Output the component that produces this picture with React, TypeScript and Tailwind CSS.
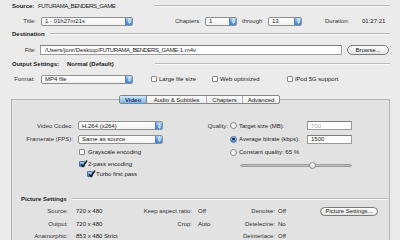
import React from "react";

const Arrows = () => (
  <svg width="5" height="6" viewBox="0 0 5 6">
    <path d="M2.5 0.3 L4.3 2.4 L0.7 2.4 Z" fill="#fff" />
    <path d="M2.5 5.7 L4.3 3.6 L0.7 3.6 Z" fill="#fff" />
  </svg>
);

const Popup = ({ text, w, caps }: { text: string; w: string; caps?: boolean }) => (
  <div className={`flex items-center h-[9px] ${w} shrink-0 bg-gradient-to-b from-white to-[#f2f2f2] border border-[#8f8f8f] rounded-[2px] overflow-hidden`}>
    <span className={`flex-1 pl-[3px] whitespace-nowrap overflow-hidden ${caps ? "tracking-[-0.2px]" : ""}`}>{text}</span>
    <div className="h-full w-[7px] shrink-0 bg-gradient-to-b from-[#a9d1f7] via-[#5a9de3] to-[#3f83d4] flex items-center justify-center border-l border-[#5a7fb0]">
      <Arrows />
    </div>
  </div>
);

const Check = ({ checked }: { checked?: boolean }) =>
  checked ? (
    <div className="relative w-[6px] h-[6px] shrink-0 rounded-[1px] border border-[#4a6fa5] bg-gradient-to-b from-[#a9d1f7] to-[#3f83d4]">
      <svg className="absolute -top-[2px] -left-[0px]" width="8" height="8" viewBox="0 0 8 8">
        <path d="M1 4.2 L3 6.5 L7 0.5" stroke="#1b1b1b" strokeWidth="1.4" fill="none" />
      </svg>
    </div>
  ) : (
    <div className="w-[6px] h-[6px] shrink-0 rounded-[1px] border border-[#8a8a8a] bg-gradient-to-b from-[#f0f0f0] to-white" />
  );

const Radio = ({ on }: { on?: boolean }) =>
  on ? (
    <div className="w-[7px] h-[7px] shrink-0 rounded-full border border-[#4a6fa5] bg-gradient-to-b from-[#a9d1f7] to-[#3f83d4] flex items-center justify-center">
      <div className="w-[2.5px] h-[2.5px] rounded-full bg-[#1b1b1b]" />
    </div>
  ) : (
    <div className="w-[7px] h-[7px] shrink-0 rounded-full border border-[#8a8a8a] bg-gradient-to-b from-[#eeeeee] to-white" />
  );

const Field = ({ text, w, gray }: { text: string; w: string; gray?: boolean }) => (
  <div className={`h-[9px] ${w} shrink-0 bg-white border border-[#9a9a9a] border-t-[#7d7d7d] flex items-center pl-[3px] whitespace-nowrap overflow-hidden ${gray ? "text-[#a8a8a8]" : ""}`}>
    {text}
  </div>
);

const Line = () => <div className="flex-1 h-[2px] border-t border-[#b9b9b9] border-b border-b-[#f8f8f8]" />;

export default function App() {
  return (
    <div className="w-[400px] h-[240px] overflow-hidden bg-[#ebebeb] text-[6px] leading-none text-[#222] font-['Liberation_Sans',Arial,sans-serif]">
      {/* Source */}
      <div className="h-[12px] flex items-center pl-[12px] pr-[10px]">
        <span className="w-[26px] font-bold shrink-0">Source:</span>
        <span className="w-[116px] shrink-0 tracking-[-0.45px]">FUTURAMA_BENDERS_GAME</span>
        <Line />
      </div>
      {/* Title row */}
      <div className="h-[18px] flex items-center">
        <span className="w-[36px] text-right shrink-0 text-[#333]">Title:</span>
        <div className="ml-[5px]"><Popup text="1 - 01h27m21s" w="w-[92px]" /></div>
        <span className="ml-[42px] w-[30px] shrink-0 text-[#333]">Chapters:</span>
        <Popup text="1" w="w-[32px]" />
        <span className="ml-[5px] w-[26px] shrink-0 text-[#333]">through</span>
        <Popup text="13" w="w-[34px]" />
        <span className="ml-[23px] w-[37px] shrink-0 text-[#333]">Duration:</span>
        <span className="shrink-0">01:27:21</span>
      </div>
      {/* Destination */}
      <div className="h-[8px] flex items-center pl-[12px] pr-[10px]">
        <span className="w-[38px] font-bold shrink-0">Destination</span>
        <Line />
      </div>
      {/* File */}
      <div className="mt-[4px] h-[16px] flex items-center">
        <span className="w-[36px] text-right shrink-0 text-[#333]">File:</span>
        <div className="ml-[4px]">
          <div className="h-[10px] w-[302px] bg-white border border-[#9a9a9a] border-t-[#7d7d7d] flex items-center pl-[4px] whitespace-nowrap overflow-hidden">
            /Users/jonr/Desktop/<span className="tracking-[-0.4px]">FUTURAMA_BENDERS_GAME</span>-1.m4v
          </div>
        </div>
        <div className="ml-[5px] h-[10px] w-[42px] rounded-full border border-[#7a7a7a] bg-gradient-to-b from-white to-[#e4e4e4] flex items-center justify-center">
          Browse...
        </div>
      </div>
      {/* Output settings */}
      <div className="h-[12px] flex items-center pl-[12px] pr-[10px]">
        <span className="w-[55px] font-bold shrink-0">Output Settings:</span>
        <span className="w-[88px] font-bold shrink-0">Normal (Default)</span>
        <Line />
      </div>
      {/* Format */}
      <div className="h-[18px] flex items-center">
        <span className="w-[35px] text-right shrink-0 text-[#333]">Format:</span>
        <div className="ml-[6px]"><Popup text="MP4 file" w="w-[92px]" /></div>
        <div className="ml-[18px] w-[61px] shrink-0 flex items-center gap-[2px]">
          <Check /> <span>Large file size</span>
        </div>
        <div className="w-[75px] shrink-0 flex items-center gap-[2px]">
          <Check /> <span>Web optimized</span>
        </div>
        <div className="shrink-0 flex items-center gap-[2px]">
          <Check /> <span>iPod 5G support</span>
        </div>
      </div>
      {/* Tabs */}
      <div className="mt-[7px] relative z-10 ml-[119px] w-[161px] h-[9px] flex border border-[#858585] rounded-[2px] overflow-hidden bg-gradient-to-b from-white to-[#ececec] text-[#222]">
        <div className="w-[27px] shrink-0 flex items-center justify-center bg-gradient-to-b from-[#d3e8fb] via-[#a3cbf1] to-[#7fb6ea] border-r border-[#858585] font-bold text-[#1e3a66]">Video</div>
        <div className="w-[60px] shrink-0 flex items-center justify-center border-r border-[#b0b0b0]">Audio &amp; Subtitles</div>
        <div className="w-[36px] shrink-0 flex items-center justify-center border-r border-[#b0b0b0]">Chapters</div>
        <div className="flex-1 flex items-center justify-center">Advanced</div>
      </div>
      {/* Panel */}
      <div className="-mt-[5px] ml-[11px] w-[379px] h-[200px] bg-[#e2e2e2] border border-[#b3b3b3] border-b-0">
        <div className="pt-[19px] flex">
          {/* left column */}
          <div className="w-[188px] shrink-0 flex flex-col">
            <div className="h-[13px] flex items-center">
              <span className="w-[61px] text-right shrink-0 text-[#333]">Video Codec:</span>
              <div className="ml-[5px]"><Popup text="H.264 (x264)" w="w-[85px]" /></div>
            </div>
            <div className="h-[14px] flex items-center">
              <span className="w-[61px] text-right shrink-0 text-[#333]">Framerate (FPS):</span>
              <div className="ml-[5px]"><Popup text="Same as source" w="w-[85px]" /></div>
            </div>
            <div className="h-[12px] flex items-center pl-[67px] gap-[3px]">
              <Check /> <span>Grayscale encoding</span>
            </div>
            <div className="h-[11px] flex items-center pl-[67px] gap-[3px]">
              <Check checked /> <span>2-pass encoding</span>
            </div>
            <div className="h-[10px] flex items-center pl-[75px] gap-[3px]">
              <Check checked /> <span>Turbo first pass</span>
            </div>
          </div>
          {/* right column */}
          <div className="flex flex-col">
            <div className="h-[13px] flex items-center">
              <span className="w-[28px] text-right shrink-0 text-[#333]">Quality:</span>
              <div className="ml-[2px] w-[77px] shrink-0 flex items-center gap-[2px]">
                <Radio /> <span>Target size (MB):</span>
              </div>
              <Field text="700" w="w-[45px]" gray />
            </div>
            <div className="h-[14px] flex items-center">
              <div className="ml-[30px] w-[77px] shrink-0 flex items-center gap-[2px]">
                <Radio on /> <span>Average bitrate (kbps):</span>
              </div>
              <Field text="1500" w="w-[45px]" />
            </div>
            <div className="h-[12px] flex items-center">
              <div className="ml-[30px] flex items-center gap-[2px]">
                <Radio /> <span>Constant quality: 65 %</span>
              </div>
            </div>
            <div className="h-[14px] flex items-center">
              <div className="ml-[40px] w-[112px] h-[3px] relative rounded-full bg-gradient-to-b from-[#a8a8a8] to-[#d8d8d8] border border-[#9a9a9a]">
                <div className="absolute left-[68px] -top-[3px] w-[7px] h-[7px] rounded-full border border-[#8a8a8a] bg-gradient-to-b from-white to-[#dcdcdc]" />
              </div>
            </div>
          </div>
        </div>
        {/* Picture settings */}
        <div className="mt-[14px] h-[12px] flex items-center pl-[9px] pr-[1px]">
          <span className="w-[51px] font-bold shrink-0">Picture Settings</span>
          <Line />
        </div>
        <div className="flex flex-col text-[#222]">
          <div className="h-[12.5px] flex items-center">
            <span className="w-[56px] text-right shrink-0 text-[#333]">Source:</span>
            <span className="ml-[8px] w-[56px] shrink-0">720 x 480</span>
            <span className="w-[60px] text-right shrink-0 text-[#333]">Keep aspect ratio:</span>
            <span className="ml-[6px] w-[32px] shrink-0">Off</span>
            <span className="w-[45px] text-right shrink-0 text-[#333]">Denoise:</span>
            <span className="ml-[3px] w-[30px] shrink-0">Off</span>
            <div className="ml-[12px] h-[9px] w-[58px] rounded-full border border-[#7a7a7a] bg-gradient-to-b from-white to-[#e4e4e4] flex items-center justify-center">
              Picture Settings...
            </div>
          </div>
          <div className="h-[12.5px] flex items-center">
            <span className="w-[56px] text-right shrink-0 text-[#333]">Output:</span>
            <span className="ml-[8px] w-[56px] shrink-0">720 x 480</span>
            <span className="w-[60px] text-right shrink-0 text-[#333]">Crop:</span>
            <span className="ml-[6px] w-[32px] shrink-0">Auto</span>
            <span className="w-[45px] text-right shrink-0 text-[#333]">Detelecine:</span>
            <span className="ml-[3px] w-[30px] shrink-0">No</span>
          </div>
          <div className="h-[12.5px] flex items-center">
            <span className="w-[56px] text-right shrink-0 text-[#333]">Anamorphic:</span>
            <span className="ml-[8px] w-[56px] shrink-0">853 x 480 Strict</span>
            <span className="w-[60px] shrink-0" />
            <span className="ml-[6px] w-[32px] shrink-0" />
            <span className="w-[45px] text-right shrink-0 text-[#333]">Deinterlace:</span>
            <span className="ml-[3px] w-[30px] shrink-0">Off</span>
          </div>
          <div className="h-[12.5px] flex items-center">
            <span className="w-[56px] shrink-0" />
            <span className="ml-[8px] w-[56px] shrink-0" />
            <span className="w-[60px] shrink-0" />
            <span className="ml-[6px] w-[32px] shrink-0" />
            <span className="w-[45px] text-right shrink-0 text-[#333]">Deblock:</span>
            <span className="ml-[3px] w-[30px] shrink-0">Off</span>
          </div>
        </div>
      </div>
    </div>
  );
}
